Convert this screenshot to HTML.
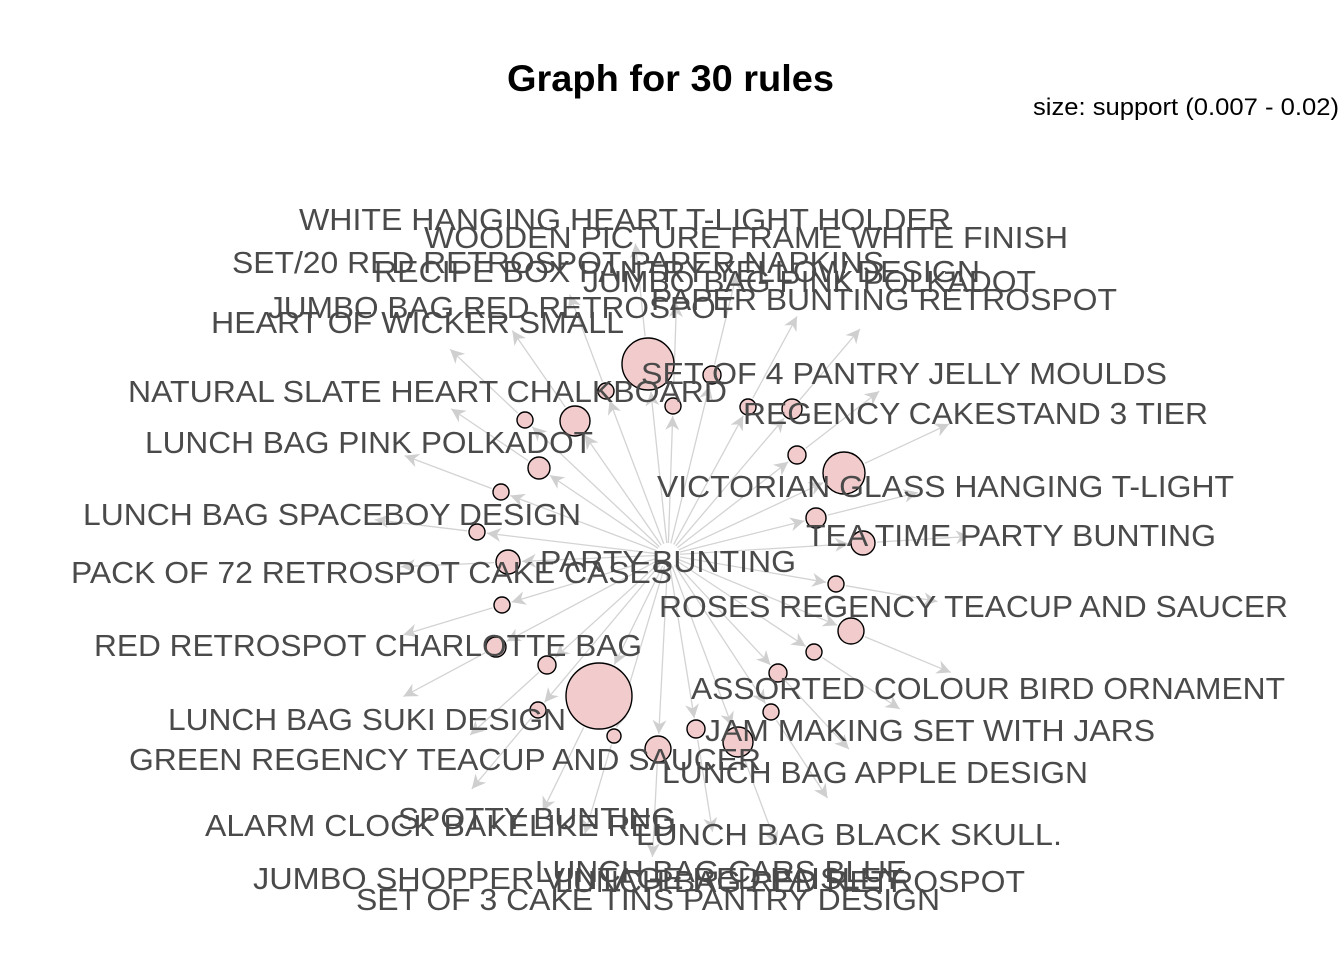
<!DOCTYPE html>
<html><head><meta charset="utf-8"><style>
html,body{margin:0;padding:0;background:#fff;width:1344px;height:960px;overflow:hidden}
svg{display:block}
.l{font-family:"Liberation Sans",Arial,sans-serif;font-size:31px;fill:#4a4a4a}
</style></head><body>
<svg id="s" width="1344" height="960" viewBox="0 0 1344 960" xmlns="http://www.w3.org/2000/svg">
<defs><marker id="a" viewBox="0 0 10 10" refX="10" refY="5" markerWidth="14" markerHeight="14" markerUnits="userSpaceOnUse" orient="auto"><path d="M0,0 L10,5 L0,10 L3,5 z" fill="#cfcfcf"/></marker></defs>
<g id="edges" stroke="#d3d3d3" stroke-width="1.3" fill="none"></g>
<g id="nodes" fill="#f2cccc" stroke="#000" stroke-width="1.4"></g>
<text x="507" y="91" textLength="327" lengthAdjust="spacingAndGlyphs" style="font-family:'Liberation Sans',Arial,sans-serif;font-weight:bold;font-size:37px;fill:#000">Graph for 30 rules</text>
<text x="1033" y="115" textLength="306" lengthAdjust="spacingAndGlyphs" style="font-family:'Liberation Sans',Arial,sans-serif;font-size:24px;fill:#000">size: support (0.007 - 0.02)</text>
<g id="labels" class="l"></g>
</svg>
<script>
var NS="http://www.w3.org/2000/svg";
var C=[[648,364,26],[712,375,9],[606,391,8],[673,406,8],[525,420,8],[575,421,15],[748,407,8],[792,409,10],[539,468,11],[797,455,9],[844,473,21],[501,492,8],[816,518,10],[477,532,8],[863,543,12],[508,562,12],[836,584,8],[502,605,8],[851,631,13],[496,647,10],[814,652,8],[547,665,9],[599,696,33],[778,673,9],[538,710,8],[771,712,8],[614,736,7],[658,749,13],[696,729,9],[738,742,15]];
var L=[["WHITE HANGING HEART T-LIGHT HOLDER",299,951,230],["WOODEN PICTURE FRAME WHITE FINISH",424,1068,248],["SET/20 RED RETROSPOT PAPER NAPKINS",232,884,273],["RECIPE BOX PANTRY YELLOW DESIGN",374,980,282],["JUMBO BAG PINK POLKADOT",583,1036,292],["PAPER BUNTING RETROSPOT",651,1117,310],["JUMBO BAG RED RETROSPOT",268,735,318],["HEART OF WICKER SMALL",211,624,333],["NATURAL SLATE HEART CHALKBOARD",128,727,402],["SET OF 4 PANTRY JELLY MOULDS",641,1167,384],["REGENCY CAKESTAND 3 TIER",743,1208,424],["LUNCH BAG PINK POLKADOT",145,593,453],["VICTORIAN GLASS HANGING T-LIGHT",657,1234,497],["LUNCH BAG SPACEBOY DESIGN",83,581,525],["TEA TIME PARTY BUNTING",806,1216,546],["PARTY BUNTING",540,796,572],["PACK OF 72 RETROSPOT CAKE CASES",71,672,583],["ROSES REGENCY TEACUP AND SAUCER",659,1288,617],["RED RETROSPOT CHARLOTTE BAG",94,642,656],["ASSORTED COLOUR BIRD ORNAMENT",691,1285,699],["LUNCH BAG SUKI DESIGN",168,566,730],["JAM MAKING SET WITH JARS",705,1155,741],["GREEN REGENCY TEACUP AND SAUCER",129,761,770],["LUNCH BAG APPLE DESIGN",662,1088,783],["ALARM CLOCK BAKELIKE RED",205,675,836],["SPOTTY BUNTING",398,676,829],["LUNCH BAG  BLACK SKULL.",636,1062,845],["JUMBO SHOPPER VINTAGE RED PAISLEY",253,903,889],["LUNCH BAG CARS BLUE",535,907,882],["LUNCH BAG RED RETROSPOT",555,1025,892],["SET OF 3 CAKE TINS PANTRY DESIGN",356,940,910]];
var cx=668,cy=555,E=document.getElementById("edges"),N=document.getElementById("nodes"),T=document.getElementById("labels");
function ln(x1,y1,x2,y2){var l=document.createElementNS(NS,"line");l.setAttribute("x1",x1);l.setAttribute("y1",y1);l.setAttribute("x2",x2);l.setAttribute("y2",y2);l.setAttribute("marker-end","url(#a)");E.appendChild(l);}
C.forEach(function(c){var dx=c[0]-cx,dy=c[1]-cy,d=Math.sqrt(dx*dx+dy*dy),ux=dx/d,uy=dy/d;
ln(cx+ux*12,cy+uy*12,c[0]-ux*(c[2]+2),c[1]-uy*(c[2]+2));
ln(c[0]+ux*(c[2]+2),c[1]+uy*(c[2]+2),c[0]+ux*(c[2]+95),c[1]+uy*(c[2]+95));
var k=document.createElementNS(NS,"circle");k.setAttribute("cx",c[0]);k.setAttribute("cy",c[1]);k.setAttribute("r",c[2]);N.appendChild(k);});
L.forEach(function(t){var e=document.createElementNS(NS,"text");e.setAttribute("x",t[1]);e.setAttribute("y",t[3]);e.setAttribute("textLength",t[2]-t[1]);e.setAttribute("lengthAdjust","spacingAndGlyphs");e.textContent=t[0];T.appendChild(e);});
</script>
</body></html>
